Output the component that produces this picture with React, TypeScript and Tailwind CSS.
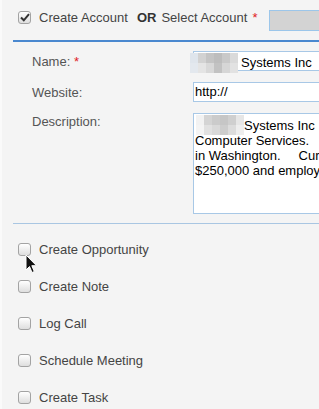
import React from "react";

const FONT = { fontFamily: '"Liberation Sans", Arial, sans-serif' };

const Checkbox = ({ checked = false }: { checked?: boolean }) => (
  <span className="relative flex h-[13px] w-[13px] shrink-0 items-center justify-center rounded-[3px] border border-[#a3a3a3] bg-gradient-to-b from-white to-[#dedede]">
    {checked && (
      <svg width="10" height="9" viewBox="0 0 10 9" className="absolute left-[1px] top-[1px]">
        <path d="M1 4.5 L3.8 7.3 L9 1.2" fill="none" stroke="#333" strokeWidth="2" />
      </svg>
    )}
  </span>
);

// pixelated blur standing in for the hidden company name
const Blur = ({ cols }: { cols: string[] }) => (
  <div className="grid shrink-0 grid-cols-6 grid-rows-2">
    {cols.map((c, i) => (
      <div key={i} className={`h-[10px] w-[8px] ${c}`} />
    ))}
  </div>
);

const nameCells = [
  "bg-[#dfe5ec]", "bg-[#d2d2d2]", "bg-[#c4c4c4]", "bg-[#bdbdbd]", "bg-[#c9c9c9]", "bg-[#dadada]",
  "bg-[#e3e8ee]", "bg-[#e4e4e4]", "bg-[#d8d8d8]", "bg-[#c2c2c2]", "bg-[#d6d6d6]", "bg-[#e2e2e2]",
];
const descCells = [
  "bg-[#f2f2f2]", "bg-[#d4d4d4]", "bg-[#cbcbcb]", "bg-[#c6c6c6]", "bg-[#cfcfcf]", "bg-[#e6e6e6]",
  "bg-[#f4f4f4]", "bg-[#e1e1e1]", "bg-[#d9d9d9]", "bg-[#cdcdcd]", "bg-[#dcdcdc]", "bg-[#eeeeee]",
];

const actions = ["Create Opportunity", "Create Note", "Log Call", "Schedule Meeting", "Create Task"];

const Cursor = () => (
  <svg width="13" height="20" viewBox="0 0 13 20" className="absolute left-[23px] top-[254px]">
    <path
      d="M1 1 L1 16 L4.5 12.5 L7 18.5 L9.3 17.5 L6.8 11.7 L11.5 11.7 Z"
      fill="#111"
      stroke="#fff"
      strokeWidth="1"
      strokeLinejoin="round"
    />
  </svg>
);

export default function App() {
  return (
    <div
      style={FONT}
      className="relative h-[409px] w-[319px] overflow-hidden border-l-2 border-[#fafafa] bg-[#f4f4f4] text-[13px] text-[#444]"
    >
      {/* header row */}
      <div className="flex h-[40px] items-start pl-[16px] pt-[10px]">
        <span className="mt-[1px]">
          <Checkbox checked />
        </span>
        <span className="ml-[8px] whitespace-nowrap leading-[15px]">Create Account</span>
        <span className="ml-[9px] font-bold leading-[15px] text-[#333]">OR</span>
        <span className="ml-[5px] whitespace-nowrap leading-[15px]">Select Account</span>
        <span className="ml-[5px] leading-[15px] text-[#e0201f]">*</span>
        <div className="ml-[12px] h-[21px] w-[80px] shrink-0 border border-[#9cc6ea] bg-[#d3d3d3]" />
      </div>
      <div className="ml-[11px] h-[2px] bg-[#4a88cf]" />

      {/* form */}
      <div className="flex flex-col gap-[11px] pt-[9px]">
        <div className="flex items-center">
          <div className="w-[191px] shrink-0 pl-[30px] leading-[15px] text-[#555]">
            Name: <span className="text-[#e0201f]">*</span>
          </div>
          <div className="relative h-[20px] w-[140px] shrink-0 border border-[#a8c8e6] bg-white">
            <div className="absolute -left-[4px] top-[1px] flex items-center">
              <Blur cols={nameCells} />
              <span className="ml-[3px] whitespace-nowrap text-black">Systems Inc</span>
            </div>
          </div>
        </div>
        <div className="flex items-center">
          <div className="w-[191px] shrink-0 pl-[30px] leading-[15px] text-[#555]">Website:</div>
          <div className="flex h-[20px] w-[140px] shrink-0 items-center border border-[#a8c8e6] bg-white pl-[1px] text-black">
            http://
          </div>
        </div>
        <div className="flex items-start">
          <div className="w-[191px] shrink-0 pl-[30px] pt-[1px] leading-[15px] text-[#555]">Description:</div>
          <div className="h-[101px] w-[140px] shrink-0 overflow-hidden border border-[#a8c8e6] bg-white pl-[1px] pt-[4px] leading-[15px] text-black">
            <div className="relative h-[15px] pl-[49px]">
              <div className="absolute left-[1px] -top-[3px]">
                <Blur cols={descCells} />
              </div>
              <span className="whitespace-nowrap">Systems Inc</span>
            </div>
            <div className="whitespace-nowrap">Computer Services.</div>
            <div className="whitespace-pre">in Washington.     Currently</div>
            <div className="whitespace-nowrap">$250,000 and employs</div>
          </div>
        </div>
      </div>

      <div className="ml-[11px] mt-[9px] h-px bg-[#a9c6e2]" />

      {/* action checkboxes */}
      <div className="flex flex-col pt-[7px]">
        {actions.map((a) => (
          <label key={a} className="flex h-[37px] items-center pl-[16px]">
            <Checkbox />
            <span className="ml-[8px] leading-[15px]">{a}</span>
          </label>
        ))}
      </div>

      <Cursor />
    </div>
  );
}
